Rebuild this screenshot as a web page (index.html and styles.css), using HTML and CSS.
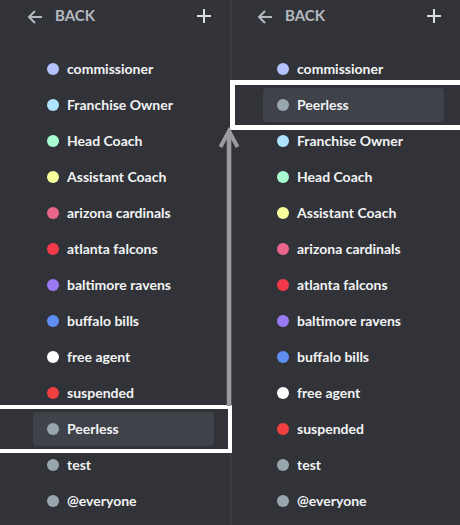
FILE: index.html
```html
<!DOCTYPE html>
<html lang="en">
<head>
<meta charset="utf-8">
<title>Roles</title>
<link rel="stylesheet" href="styles.css">
</head>
<body>
<div class="screen">
  <section class="panel">
    <header class="bar">
      <svg class="back-icon" width="16" height="14" viewBox="0 0 16 14"><path d="M15 7H2M8 1L2 7l6 6" fill="none" stroke="currentColor" stroke-width="2"/></svg>
      <span class="back">BACK</span>
      <svg class="plus" width="14" height="14" viewBox="0 0 14 14"><path d="M7 0v14M0 7h14" fill="none" stroke="currentColor" stroke-width="2"/></svg>
    </header>
    <ul class="roles">
      <li class="role"><span class="dot d-comm"></span>commissioner</li>
      <li class="role"><span class="dot d-owner"></span>Franchise Owner</li>
      <li class="role"><span class="dot d-head"></span>Head Coach</li>
      <li class="role"><span class="dot d-asst"></span>Assistant Coach</li>
      <li class="role"><span class="dot d-ari"></span>arizona cardinals</li>
      <li class="role"><span class="dot d-atl"></span>atlanta falcons</li>
      <li class="role"><span class="dot d-bal"></span>baltimore ravens</li>
      <li class="role"><span class="dot d-buf"></span>buffalo bills</li>
      <li class="role"><span class="dot d-free"></span>free agent</li>
      <li class="role"><span class="dot d-susp"></span>suspended</li>
      <li class="role sel"><span class="dot d-gray"></span>Peerless</li>
      <li class="role"><span class="dot d-gray"></span>test</li>
      <li class="role"><span class="dot d-gray"></span>@everyone</li>
    </ul>
  </section>
  <section class="panel panel-right">
    <header class="bar">
      <svg class="back-icon" width="16" height="14" viewBox="0 0 16 14"><path d="M15 7H2M8 1L2 7l6 6" fill="none" stroke="currentColor" stroke-width="2"/></svg>
      <span class="back">BACK</span>
      <svg class="plus" width="14" height="14" viewBox="0 0 14 14"><path d="M7 0v14M0 7h14" fill="none" stroke="currentColor" stroke-width="2"/></svg>
    </header>
    <ul class="roles">
      <li class="role"><span class="dot d-comm"></span>commissioner</li>
      <li class="role sel"><span class="dot d-gray"></span>Peerless</li>
      <li class="role"><span class="dot d-owner"></span>Franchise Owner</li>
      <li class="role"><span class="dot d-head"></span>Head Coach</li>
      <li class="role"><span class="dot d-asst"></span>Assistant Coach</li>
      <li class="role"><span class="dot d-ari"></span>arizona cardinals</li>
      <li class="role"><span class="dot d-atl"></span>atlanta falcons</li>
      <li class="role"><span class="dot d-bal"></span>baltimore ravens</li>
      <li class="role"><span class="dot d-buf"></span>buffalo bills</li>
      <li class="role"><span class="dot d-free"></span>free agent</li>
      <li class="role"><span class="dot d-susp"></span>suspended</li>
      <li class="role"><span class="dot d-gray"></span>test</li>
      <li class="role"><span class="dot d-gray"></span>@everyone</li>
    </ul>
  </section>
  <div class="mark mark-left"></div>
  <div class="mark mark-right"></div>
  <svg class="move-arrow" width="30" height="282" viewBox="0 0 30 282"><path d="M14 8V282" fill="none" stroke="#9a9ba0" stroke-width="4.5"/><path d="M5.5 23L14 7l8.5 16" fill="none" stroke="#9a9ba0" stroke-width="4"/></svg>
</div>
</body>
</html>
```
FILE: styles.css
```css
* { box-sizing: border-box; }
html, body { margin: 0; padding: 0; }
body {
  background: #313338;
  font-family: Lato, "Noto Sans", sans-serif;
}
.screen {
  position: relative;
  width: 460px;
  height: 525px;
  overflow: hidden;
  display: flex;
  background: #313338;
}
.panel {
  width: 230px;
  flex: none;
  height: 100%;
}
.panel-right {
  border-left: 2px solid #3a3c42;
}
.bar {
  height: 30px;
  display: flex;
  align-items: center;
  padding: 0 19px 0 27px;
}
.panel-right .bar { padding-left: 25px; }
.back-icon { color: #b5bac1; flex: none; margin-top: 3px; }
.back {
  margin-left: 12px;
  color: #b5bac1;
  font-size: 15px;
  font-weight: 700;
  letter-spacing: 0;
}
.plus { margin-left: auto; color: #dbdee1; flex: none; margin-top: 1px; }
.roles {
  list-style: none;
  margin: 22px 0 0;
  padding: 0 0 0 33px;
}
.panel-right .roles { padding-left: 31px; }
.role {
  width: 181px;
  height: 34px;
  margin-bottom: 2px;
  border-radius: 4px;
  display: flex;
  align-items: center;
  gap: 8px;
  padding: 0 0 2px 14px;
  color: #f2f3f5;
  font-size: 14px;
  font-weight: 700;
  white-space: nowrap;
}
.role.sel { background: #404249; }
.dot {
  width: 12px;
  height: 12px;
  border-radius: 50%;
  flex: none;
  margin-top: 2px;
}
.d-comm { background: #b3c1ff; }
.d-owner { background: #b0e3ff; }
.d-head { background: #a9ffd1; }
.d-asst { background: #f6ff9b; }
.d-ari { background: #e9668a; }
.d-atl { background: #f4394a; }
.d-bal { background: #9b79f2; }
.d-buf { background: #5e8ef2; }
.d-free { background: #ffffff; }
.d-susp { background: #f23f42; }
.d-gray { background: #99a6ae; }
.mark {
  position: absolute;
  border: 4px solid #ffffff;
}
.mark-left {
  left: -10px;
  top: 405px;
  width: 242px;
  height: 48px;
}
.mark-right {
  left: 230px;
  top: 80px;
  width: 240px;
  height: 50px;
  border-width: 5px;
}
.move-arrow {
  position: absolute;
  left: 215px;
  top: 124px;
}
```
